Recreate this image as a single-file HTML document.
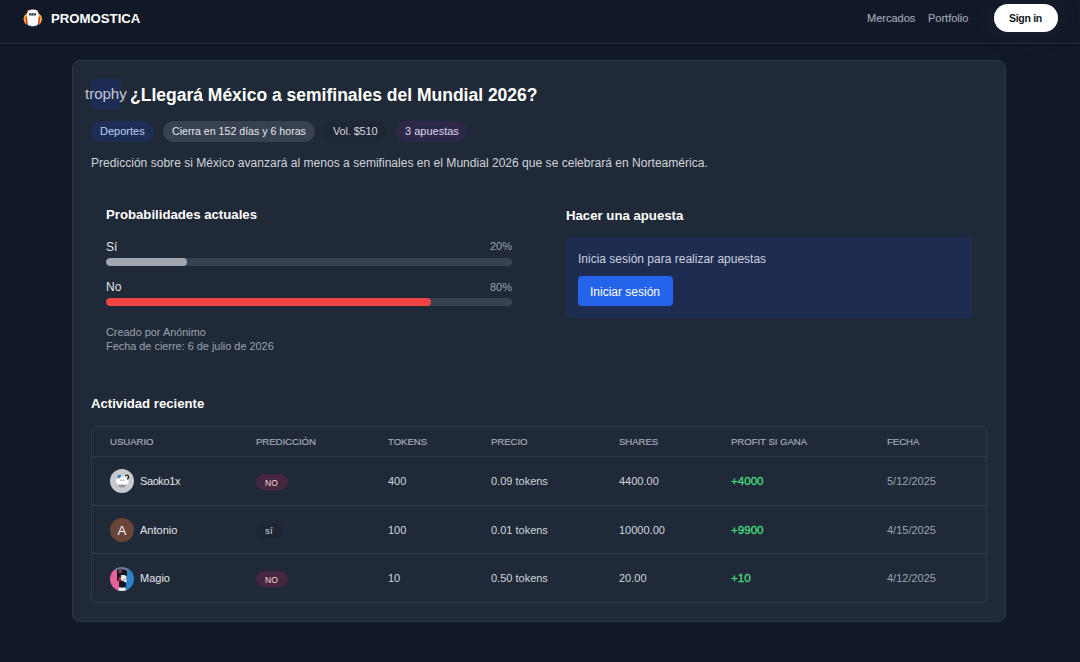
<!DOCTYPE html>
<html><head><meta charset="utf-8">
<style>
*{margin:0;padding:0;box-sizing:border-box}
html,body{width:1080px;height:662px;overflow:hidden;background:#111827;font-family:"Liberation Sans",sans-serif;color:#fff}
.t{position:absolute;white-space:nowrap;line-height:normal}
.b{font-weight:bold}
.box{position:absolute}
header{position:absolute;left:0;top:0;width:1080px;height:44px;background:#111827;border-bottom:1px solid #263142;box-shadow:0 1px 2px rgba(0,0,0,.35)}
.nav{font-size:11px;color:#a3aab6;top:12px;-webkit-text-stroke:0.15px #a3aab6}
.pill{position:absolute;top:120.5px;height:21px;border-radius:10.5px}
.pt{font-size:11px;top:124.9px}
.h3{font-size:13.2px;font-weight:bold;color:#fff}
.bar{position:absolute;left:106px;width:406px;height:8px;border-radius:4px;background:#374151;overflow:hidden}
.fill{position:absolute;left:0;top:0;height:8px;border-radius:4px}
.meta{font-size:10.9px;color:#9ca3af;left:106px}
.th{font-size:9.6px;letter-spacing:-0.04px;color:#a3a9b4;top:436.2px;-webkit-text-stroke:0.2px #a3a9b4}
.hr{position:absolute;left:92px;width:894px;height:1px;background:#2f3a4a}
.td{font-size:11px;color:#d1d5db}
.nm{font-size:11px;color:#e5e7eb;left:140px}
.avatar{position:absolute;left:110px;width:24px;height:24px;border-radius:12px;overflow:hidden}
.badge{position:absolute;left:256px;height:16px;border-radius:8px}
.green{color:#4ade80;font-size:11.6px!important;margin-top:-0.55px;-webkit-text-stroke:0.3px #4ade80}
.date{color:#9ca3af}
</style></head><body>
<header></header>
<svg class="box" style="left:21px;top:7px" width="24" height="22" viewBox="0 0 24 22">
  <path d="M5.5 6.5 Q2.2 9 2.6 12.5 Q3 16 5.5 17.5 L6 7 Z" fill="#f4b731"/>
  <path d="M18 6.5 Q21.3 9 21 12.5 Q20.6 16 18 17.5 L17.5 7 Z" fill="#f4b731"/>
  <path d="M4.3 10 L7 9.5 L7.3 18 L5.3 17.8 Z" fill="#d8352a"/>
  <path d="M19.3 10 L16.6 9.5 L16.3 18 L18.3 17.8 Z" fill="#d8352a"/>
  <path d="M6 3.3 L8.6 2.8 L8.2 5.2 L6.2 5 Z" fill="#c9372c"/>
  <path d="M17.4 3.3 L14.8 2.8 L15.2 5.2 L17.2 5 Z" fill="#c9372c"/>
  <path d="M5.8 8.5 Q5.8 2.6 11.8 2.6 Q17.8 2.6 17.8 8.5 L16.8 17 Q16.4 19.2 11.8 19.2 Q7.2 19.2 6.8 17 Z" fill="#fff"/>
  <path d="M7.5 18.6 Q11.8 20 16 18.6" stroke="#5b8bd8" stroke-width="0.7" fill="none"/>
  <rect x="7.8" y="6" width="7.3" height="2.8" rx="0.8" fill="#7b8088"/>
  <circle cx="8.7" cy="7.3" r="0.75" fill="#1b2450"/>
  <circle cx="11.5" cy="7.1" r="0.75" fill="#1b2450"/>
  <circle cx="14.3" cy="7.3" r="0.75" fill="#1b2450"/>
</svg>
<div class="t b" style="left:51px;top:11.2px;font-size:13.2px;color:#fff">PROMOSTICA</div>
<div class="t nav" style="left:867px">Mercados</div>
<div class="t nav" style="left:928px">Portfolio</div>
<div class="box" style="left:994px;top:4px;width:64px;height:28px;border-radius:14px;background:#fff;box-shadow:0 0 24px 6px rgba(120,140,170,0.06)"></div>
<div class="t b" style="left:1009px;top:12.2px;font-size:10.5px;color:#111827;letter-spacing:-0.3px">Sign in</div>

<div class="box" style="left:72px;top:60px;width:934px;height:562px;background:#1f2937;border:1px solid #2e3847;border-radius:8px"></div>
<div class="box" style="left:91px;top:79px;width:30px;height:30px;background:#1e2c55;border-radius:4px"></div>
<div class="t" style="left:85px;top:85px;font-size:15px;color:#c4c9d1">trophy</div>
<div class="t b" style="left:130px;top:84.6px;font-size:17.5px;color:#fff">¿Llegará México a semifinales del Mundial 2026?</div>

<div class="pill" style="left:91px;width:63px;background:#1e2d55"></div>
<div class="t pt" style="left:100px;color:#bcd0f0">Deportes</div>
<div class="pill" style="left:163px;width:152px;background:#374151"></div>
<div class="t pt" style="left:172px;color:#e5e7eb;font-size:10.62px;margin-top:0.35px">Cierra en 152 días y 6 horas</div>
<div class="pill" style="left:324px;width:62px;background:#1e2634"></div>
<div class="t pt" style="left:333px;color:#d1d5db;letter-spacing:-0.15px">Vol. $510</div>
<div class="pill" style="left:396px;width:71px;background:#2d2847"></div>
<div class="t pt" style="left:405px;color:#ddd6ee">3 apuestas</div>

<div class="t" style="left:91px;top:155.7px;font-size:12.07px;color:#d1d5db">Predicción sobre si México avanzará al menos a semifinales en el Mundial 2026 que se celebrará en Norteamérica.</div>

<div class="t h3" style="left:106px;top:207.4px">Probabilidades actuales</div>
<div class="t" style="left:106px;top:239.8px;font-size:12px;color:#e5e7eb">Sí</div>
<div class="t" style="left:412px;width:100px;text-align:right;top:240px;font-size:11px;color:#9ca3af">20%</div>
<div class="bar" style="top:258px"><div class="fill" style="width:81px;background:#a1a6b0"></div></div>
<div class="t" style="left:106px;top:280.2px;font-size:12px;color:#e5e7eb">No</div>
<div class="t" style="left:412px;width:100px;text-align:right;top:280.5px;font-size:11px;color:#9ca3af">80%</div>
<div class="bar" style="top:298px"><div class="fill" style="width:325px;background:#ef4444"></div></div>
<div class="t meta" style="top:325.5px">Creado por Anónimo</div>
<div class="t meta" style="top:340.1px">Fecha de cierre: 6 de julio de 2026</div>

<div class="t h3" style="left:566px;top:207.6px">Hacer una apuesta</div>
<div class="box" style="left:566px;top:237px;width:406px;height:81px;background:#1e2c52;border-radius:4px"></div>
<div class="t" style="left:578px;top:252.3px;font-size:12px;color:#cbd2dc">Inicia sesión para realizar apuestas</div>
<div class="box" style="left:578px;top:276px;width:95px;height:30px;background:#2563eb;border-radius:4px"></div>
<div class="t" style="left:590px;top:284.9px;font-size:12px;color:#fff">Iniciar sesión</div>

<div class="t h3" style="left:91px;top:395.8px;font-size:13.15px">Actividad reciente</div>
<div class="box" style="left:91px;top:426px;width:896px;height:177px;border:1px solid #2e3847;border-radius:6px"></div>
<div class="t th" style="left:110px">USUARIO</div>
<div class="t th" style="left:256px">PREDICCIÓN</div>
<div class="t th" style="left:388px">TOKENS</div>
<div class="t th" style="left:491px">PRECIO</div>
<div class="t th" style="left:619px">SHARES</div>
<div class="t th" style="left:731px">PROFIT SI GANA</div>
<div class="t th" style="left:887px">FECHA</div>
<div class="hr" style="top:456px"></div>
<div class="hr" style="top:505px"></div>
<div class="hr" style="top:553px"></div>

<!-- row 1 -->
<div class="avatar" style="top:469px;background:#c9cacf">
  <svg width="24" height="24" viewBox="0 0 24 24">
    <path d="M8 16 Q9 18.5 12 18.5 Q15 18.5 16 16 Z" fill="#8a8f99"/>
    <path d="M10 17.2 Q12 18.8 14 17.2" stroke="#e58a80" stroke-width="0.9" fill="none"/>
    <path d="M6 12.5 Q5.5 9.5 8.5 9.5 Q9.5 7 12 7.5 Q15 6.5 16.5 9 Q19 9 18.5 12.5 Q19 15.5 15.5 15.3 Q12 16.5 8.5 15.3 Q5.5 15.5 6 12.5Z" fill="#fff"/>
    <path d="M7.2 8.5 Q7.5 5.3 10.5 5.8 L11 8 Q9 9.5 7.2 8.5Z" fill="#2b7cc4"/>
    <path d="M15.2 6.8 Q17.6 5.2 18.6 7.6 Q18.8 9.6 17 10" stroke="#2d2f36" stroke-width="1.3" fill="none"/>
    <rect x="10.3" y="10.5" width="1.2" height="1.4" fill="#8a8f99"/>
    <rect x="12.8" y="10.5" width="1.2" height="1.4" fill="#8a8f99"/>
    <circle cx="6.5" cy="14.5" r="0.6" fill="#6aa2e0"/>
    <circle cx="11.7" cy="15.5" r="0.6" fill="#6aa2e0"/>
  </svg>
</div>
<div class="t nm" style="top:475px;letter-spacing:-0.4px">Saoko1x</div>
<div class="badge" style="top:474px;width:32px;background:#44283f"></div>
<div class="t" style="left:265px;top:478px;font-size:8.5px;color:#fcd5d5">NO</div>
<div class="t td" style="left:388px;top:475px">400</div>
<div class="t td" style="left:491px;top:475px">0.09 tokens</div>
<div class="t td" style="left:619px;top:475px">4400.00</div>
<div class="t td green" style="left:731px;top:475px">+4000</div>
<div class="t td date" style="left:887px;top:475px">5/12/2025</div>

<!-- row 2 -->
<div class="avatar" style="top:518px;background:#6b4438"></div>
<div class="t" style="left:117.5px;top:523px;font-size:13.2px;color:#f3f4f6">A</div>
<div class="t nm" style="top:523.9px">Antonio</div>
<div class="badge" style="top:523px;width:27px;background:#1e2634"></div>
<div class="t" style="left:265px;top:525px;font-size:9.8px;color:#d1d5db">sí</div>
<div class="t td" style="left:388px;top:523.9px">100</div>
<div class="t td" style="left:491px;top:523.9px">0.01 tokens</div>
<div class="t td" style="left:619px;top:523.9px">10000.00</div>
<div class="t td green" style="left:731px;top:523.9px">+9900</div>
<div class="t td date" style="left:887px;top:523.9px">4/15/2025</div>

<!-- row 3 -->
<div class="avatar" style="top:566.5px;background:#1a1d2a">
  <svg width="24" height="24" viewBox="0 0 24 24">
    <rect x="0" y="0" width="9" height="24" fill="#e9609a"/>
    <rect x="16" y="0" width="8" height="24" fill="#2a83c9"/>
    <rect x="5" y="0" width="14" height="3.5" fill="#6a7a96"/>
    <path d="M7 3 Q12 1 17 4 L17 12 L7 14 Z" fill="#141422"/>
    <path d="M9 3 L12 3 L11 6 L8.5 6 Z" fill="#7a5040"/>
    <path d="M11 8 Q15 7.5 16.5 9 L16.5 15 Q14 17 11 15.5 Z" fill="#eceef2"/>
    <path d="M9 10 L11 10 L11.5 15 L9 14 Z" fill="#c23a48"/>
    <path d="M9 14 Q12 12.5 15.5 15.5 L15 19.5 Q12 21 9.5 19 Z" fill="#151522"/>
    <path d="M13 12 L15 12 L14.5 13 Z" fill="#333"/>
    <path d="M8 24 L9.5 20 Q12 21.5 15 20 L16.5 24 Z" fill="#f0f0f0"/>
  </svg>
</div>
<div class="t nm" style="top:572px">Magio</div>
<div class="badge" style="top:571px;width:32px;background:#44283f"></div>
<div class="t" style="left:265px;top:574.6px;font-size:8.5px;color:#fcd5d5">NO</div>
<div class="t td" style="left:388px;top:572px">10</div>
<div class="t td" style="left:491px;top:572px">0.50 tokens</div>
<div class="t td" style="left:619px;top:572px">20.00</div>
<div class="t td green" style="left:731px;top:572px">+10</div>
<div class="t td date" style="left:887px;top:572px">4/12/2025</div>
</body></html>
